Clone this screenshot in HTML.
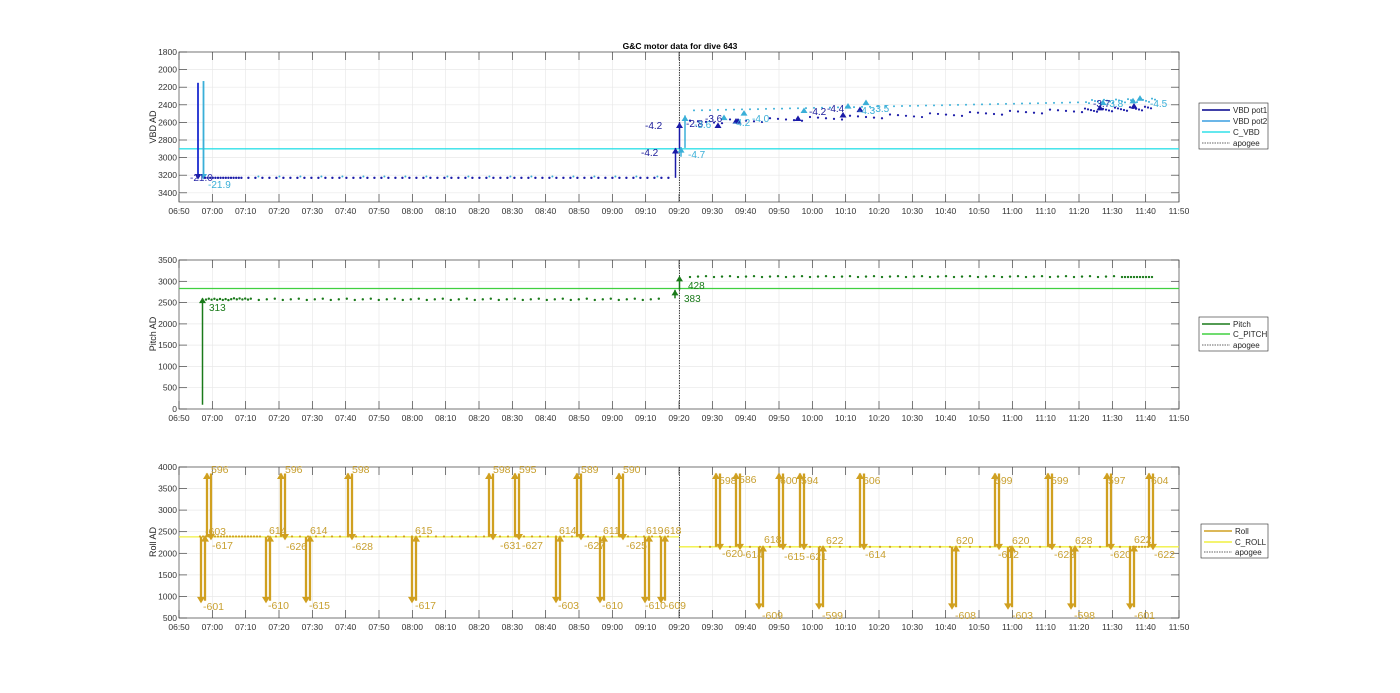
<!DOCTYPE html>
<html><head><meta charset="utf-8"><style>
html,body{margin:0;padding:0;background:#fff;}
svg{display:block;font-family:"Liberation Sans",sans-serif;}
.t{font-size:8.5px;fill:#333;}
.yl{font-size:9px;fill:#262626;}
.lg{font-size:8px;fill:#262626;}
</style></head><body>
<svg id="s" width="1400" height="693" viewBox="0 0 1400 693" xmlns="http://www.w3.org/2000/svg">
<rect width="1400" height="693" fill="#fff"/>
<g id="grid"></g>
<g id="data"></g>
<text x="680" y="49" text-anchor="middle" style="font-size:8.5px;font-weight:bold;fill:#000">G&amp;C motor data for dive 643</text>
<g class="t" text-anchor="end">
<text x="177" y="55">1800</text><text x="177" y="72.6">2000</text><text x="177" y="90.2">2200</text><text x="177" y="107.8">2400</text><text x="177" y="125.4">2600</text><text x="177" y="143">2800</text><text x="177" y="160.6">3000</text><text x="177" y="178.2">3200</text><text x="177" y="195.8">3400</text>
<text x="177" y="263">3500</text><text x="177" y="284.3">3000</text><text x="177" y="305.6">2500</text><text x="177" y="326.9">2000</text><text x="177" y="348.1">1500</text><text x="177" y="369.4">1000</text><text x="177" y="390.7">500</text><text x="177" y="412">0</text>
<text x="177" y="470">4000</text><text x="177" y="491.6">3500</text><text x="177" y="513.1">3000</text><text x="177" y="534.7">2500</text><text x="177" y="556.3">2000</text><text x="177" y="577.9">1500</text><text x="177" y="599.4">1000</text><text x="177" y="621">500</text>
</g>
<g class="yl" text-anchor="middle">
<text transform="translate(156,127) rotate(-90)">VBD AD</text>
<text transform="translate(156,334) rotate(-90)">Pitch AD</text>
<text transform="translate(156,542) rotate(-90)">Roll AD</text>
</g>
<g class="t" text-anchor="middle">
<text x="179" y="214">06:50</text><text x="212.3" y="214">07:00</text><text x="245.6" y="214">07:10</text><text x="279" y="214">07:20</text><text x="312.3" y="214">07:30</text><text x="345.6" y="214">07:40</text><text x="379" y="214">07:50</text><text x="412.3" y="214">08:00</text><text x="445.6" y="214">08:10</text><text x="479" y="214">08:20</text><text x="512.3" y="214">08:30</text><text x="545.6" y="214">08:40</text><text x="579" y="214">08:50</text><text x="612.3" y="214">09:00</text><text x="645.6" y="214">09:10</text><text x="679" y="214">09:20</text><text x="712.3" y="214">09:30</text><text x="745.6" y="214">09:40</text><text x="779" y="214">09:50</text><text x="812.3" y="214">10:00</text><text x="845.6" y="214">10:10</text><text x="879" y="214">10:20</text><text x="912.3" y="214">10:30</text><text x="945.6" y="214">10:40</text><text x="979" y="214">10:50</text><text x="1012.3" y="214">11:00</text><text x="1045.6" y="214">11:10</text><text x="1079" y="214">11:20</text><text x="1112.3" y="214">11:30</text><text x="1145.6" y="214">11:40</text><text x="1179" y="214">11:50</text>
</g>
<g class="t" text-anchor="middle">
<text x="179" y="421">06:50</text><text x="212.3" y="421">07:00</text><text x="245.6" y="421">07:10</text><text x="279" y="421">07:20</text><text x="312.3" y="421">07:30</text><text x="345.6" y="421">07:40</text><text x="379" y="421">07:50</text><text x="412.3" y="421">08:00</text><text x="445.6" y="421">08:10</text><text x="479" y="421">08:20</text><text x="512.3" y="421">08:30</text><text x="545.6" y="421">08:40</text><text x="579" y="421">08:50</text><text x="612.3" y="421">09:00</text><text x="645.6" y="421">09:10</text><text x="679" y="421">09:20</text><text x="712.3" y="421">09:30</text><text x="745.6" y="421">09:40</text><text x="779" y="421">09:50</text><text x="812.3" y="421">10:00</text><text x="845.6" y="421">10:10</text><text x="879" y="421">10:20</text><text x="912.3" y="421">10:30</text><text x="945.6" y="421">10:40</text><text x="979" y="421">10:50</text><text x="1012.3" y="421">11:00</text><text x="1045.6" y="421">11:10</text><text x="1079" y="421">11:20</text><text x="1112.3" y="421">11:30</text><text x="1145.6" y="421">11:40</text><text x="1179" y="421">11:50</text>
</g>
<g class="t" text-anchor="middle">
<text x="179" y="630">06:50</text><text x="212.3" y="630">07:00</text><text x="245.6" y="630">07:10</text><text x="279" y="630">07:20</text><text x="312.3" y="630">07:30</text><text x="345.6" y="630">07:40</text><text x="379" y="630">07:50</text><text x="412.3" y="630">08:00</text><text x="445.6" y="630">08:10</text><text x="479" y="630">08:20</text><text x="512.3" y="630">08:30</text><text x="545.6" y="630">08:40</text><text x="579" y="630">08:50</text><text x="612.3" y="630">09:00</text><text x="645.6" y="630">09:10</text><text x="679" y="630">09:20</text><text x="712.3" y="630">09:30</text><text x="745.6" y="630">09:40</text><text x="779" y="630">09:50</text><text x="812.3" y="630">10:00</text><text x="845.6" y="630">10:10</text><text x="879" y="630">10:20</text><text x="912.3" y="630">10:30</text><text x="945.6" y="630">10:40</text><text x="979" y="630">10:50</text><text x="1012.3" y="630">11:00</text><text x="1045.6" y="630">11:10</text><text x="1079" y="630">11:20</text><text x="1112.3" y="630">11:30</text><text x="1145.6" y="630">11:40</text><text x="1179" y="630">11:50</text>
</g>
<g style="font-size:10px">
<text x="190" y="181" fill="#2a2aa8">-21.0</text>
<text x="208" y="188" fill="#3aafd8">-21.9</text>
<text x="645" y="129" fill="#1a1a9a">-4.2</text>
<text x="641" y="156" fill="#1a1a9a">-4.2</text>
<text x="688" y="158" fill="#3aafd8">-4.7</text>
<text x="686" y="127" fill="#1a1a9a">-2.8</text>
<text x="694" y="128" fill="#3aafd8">-3.6</text>
<text x="705" y="122" fill="#1a1a9a">-3.6</text>
<text x="733" y="126" fill="#3aafd8">-4.2</text>
<text x="752" y="122" fill="#3aafd8">-4.0</text>
<text x="809" y="115" fill="#1a1a9a">-4.2</text>
<text x="827" y="112" fill="#1a1a9a">-4.4</text>
<text x="858" y="114" fill="#3aafd8">-4.3</text>
<text x="872" y="112" fill="#3aafd8">-3.5</text>
<text x="1093" y="107" fill="#1a1a9a">-3.7</text>
<text x="1106" y="107" fill="#3aafd8">-3.8</text>
<text x="1150" y="107" fill="#3aafd8">-4.5</text>
</g>
<g style="font-size:10px" fill="#1a7a1a">
<text x="209" y="311">313</text><text x="688" y="289">428</text><text x="684" y="302">383</text>
</g>
<g style="font-size:10.5px" fill="#c8a030">
<text x="211" y="473">596</text><text x="285" y="473">596</text><text x="352" y="473">598</text><text x="493" y="473">598</text><text x="519" y="473">595</text><text x="581" y="473">589</text><text x="623" y="473">590</text>
<text x="205" y="535">-603</text><text x="269" y="534">614</text><text x="310" y="534">614</text><text x="415" y="534">615</text><text x="559" y="534">614</text><text x="603" y="534">611</text><text x="646" y="534">619</text><text x="664" y="534">618</text>
<text x="212" y="549">-617</text><text x="286" y="550">-626</text><text x="352" y="550">-628</text><text x="500" y="549">-631</text><text x="522" y="549">-627</text><text x="584" y="549">-627</text><text x="626" y="549">-625</text>
<text x="203" y="610">-601</text><text x="268" y="609">-610</text><text x="309" y="609">-615</text><text x="415" y="609">-617</text><text x="558" y="609">-603</text><text x="602" y="609">-610</text><text x="645" y="609">-610</text><text x="665" y="609">-609</text>
<text x="719" y="484">598</text><text x="739" y="483">586</text><text x="780" y="484">600</text><text x="801" y="484">594</text><text x="863" y="484">606</text><text x="995" y="484">599</text><text x="1051" y="484">599</text><text x="1108" y="484">597</text><text x="1151" y="484">604</text>
<text x="722" y="557">-620</text><text x="742" y="558">-614</text><text x="764" y="543">618</text><text x="784" y="560">-615</text><text x="806" y="560">-621</text><text x="826" y="544">622</text><text x="865" y="558">-614</text><text x="956" y="544">620</text><text x="998" y="558">-612</text><text x="1012" y="544">620</text><text x="1054" y="558">-623</text><text x="1075" y="544">628</text><text x="1110" y="558">-620</text><text x="1134" y="543">622</text><text x="1154" y="558">-622</text>
<text x="762" y="619">-609</text><text x="822" y="619">-599</text><text x="955" y="619">-608</text><text x="1012" y="619">-603</text><text x="1074" y="619">-598</text><text x="1134" y="619">-601</text>
</g>
<g>
<rect x="1199" y="103" width="69" height="46" fill="#fff" stroke="#262626" stroke-width="0.6"/>
<line x1="1202" y1="110" x2="1230" y2="110" stroke="#00008b" stroke-width="1.5"/><text class="lg" x="1233" y="113">VBD pot1</text>
<line x1="1202" y1="121" x2="1230" y2="121" stroke="#3a9ee0" stroke-width="1.5"/><text class="lg" x="1233" y="124">VBD pot2</text>
<line x1="1202" y1="132" x2="1230" y2="132" stroke="#30e0e8" stroke-width="1.5"/><text class="lg" x="1233" y="135">C_VBD</text>
<line x1="1202" y1="143" x2="1230" y2="143" stroke="#333" stroke-width="0.8" stroke-dasharray="1.5,1"/><text class="lg" x="1233" y="146">apogee</text>
<rect x="1199" y="317" width="69" height="34" fill="#fff" stroke="#262626" stroke-width="0.6"/>
<line x1="1202" y1="324" x2="1230" y2="324" stroke="#1a7a1a" stroke-width="1.5"/><text class="lg" x="1233" y="327">Pitch</text>
<line x1="1202" y1="334" x2="1230" y2="334" stroke="#40d040" stroke-width="1.5"/><text class="lg" x="1233" y="337">C_PITCH</text>
<line x1="1202" y1="345" x2="1230" y2="345" stroke="#333" stroke-width="0.8" stroke-dasharray="1.5,1"/><text class="lg" x="1233" y="348">apogee</text>
<rect x="1201" y="524" width="67" height="34" fill="#fff" stroke="#262626" stroke-width="0.6"/>
<line x1="1204" y1="531" x2="1232" y2="531" stroke="#d0a020" stroke-width="1.5"/><text class="lg" x="1235" y="534">Roll</text>
<line x1="1204" y1="542" x2="1232" y2="542" stroke="#f0f040" stroke-width="1.5"/><text class="lg" x="1235" y="545">C_ROLL</text>
<line x1="1204" y1="552" x2="1232" y2="552" stroke="#333" stroke-width="0.8" stroke-dasharray="1.5,1"/><text class="lg" x="1235" y="555">apogee</text>
</g>
</svg>
<script>
const NS="http://www.w3.org/2000/svg";
const G=document.getElementById('grid'),D=document.getElementById('data');
function el(p,t,a){const e=document.createElementNS(NS,t);for(const k in a)e.setAttribute(k,a[k]);p.appendChild(e);return e;}
const X0=179,X1=1179;
const axes=[{t:52,b:202,ticks:[52,69.6,87.2,104.8,122.4,140,157.6,175.2,192.8]},
{t:260,b:409,ticks:[260,281.3,302.6,323.9,345.1,366.4,387.7,409]},
{t:467,b:618,ticks:[467,488.6,510.1,531.7,553.3,574.9,596.4,618]}];
axes.forEach(a=>{
 for(let i=1;i<30;i++){const x=X0+i*1000/30;el(G,'line',{x1:x,x2:x,y1:a.t,y2:a.b,stroke:'#e8e8e8','stroke-width':0.7});}
 a.ticks.forEach(y=>el(G,'line',{x1:X0,x2:X1,y1:y,y2:y,stroke:'#e8e8e8','stroke-width':0.7}));
 el(G,'rect',{x:X0,y:a.t,width:1000,height:a.b-a.t,fill:'none',stroke:'#404040','stroke-width':0.7});
 for(let i=0;i<=30;i++){const x=X0+i*1000/30;el(G,'line',{x1:x,x2:x,y1:a.t,y2:a.t+8,stroke:'#404040','stroke-width':0.7});el(G,'line',{x1:x,x2:x,y1:a.b,y2:a.b-8,stroke:'#404040','stroke-width':0.7});}
 a.ticks.forEach(y=>{el(G,'line',{x1:X0,x2:X0+8,y1:y,y2:y,stroke:'#404040','stroke-width':0.7});el(G,'line',{x1:X1,x2:X1-8,y1:y,y2:y,stroke:'#404040','stroke-width':0.7});});
 el(D,'line',{x1:679.5,x2:679.5,y1:a.t,y2:a.b,stroke:'#333','stroke-width':0.9,'stroke-dasharray':'1.5,1'});
});
function tri(x,y,up,c,s){s=s||3.5;el(D,'polygon',{points:up?`${x-s},${y+s*1.6} ${x+s},${y+s*1.6} ${x},${y}`:`${x-s},${y-s*1.6} ${x+s},${y-s*1.6} ${x},${y}`,fill:c});}
function dot(x,y,c,r){el(D,'circle',{cx:x,cy:y,r:r||1.2,fill:c});}
function vl(x,y1,y2,c,w){el(D,'line',{x1:x,x2:x,y1:y1,y2:y2,stroke:c,'stroke-width':w||1.8});}
const vy=v=>52+(v-1800)*0.088;
el(D,'line',{x1:X0,x2:X1,y1:vy(2900),y2:vy(2900),stroke:'#30e0e8','stroke-width':1.3});
vl(198,vy(2150),vy(3230),'#1a2ad0');vl(203.5,vy(2130),vy(3230),'#3aafd8');
tri(198,vy(3250),false,'#1a1aa8');tri(203.5,vy(3250),false,'#3aafd8');
for(let x=205;x<672;x+= (x<240?2.6:7)){dot(x,vy(3230),'#1a1aa8');if(x>240&&Math.floor(x)%3==0)dot(x+3,vy(3215),'#3aafd8',1);}
vl(675.5,vy(3230),vy(2890),'#1a1aa8',1.5);tri(675.5,vy(2890),true,'#1a1aa8');
vl(679.5,vy(2900),vy(2600),'#1a1aa8',1.5);tri(679.5,vy(2600),true,'#1a1aa8');
vl(681,vy(2990),vy(2880),'#3aafd8',1.5);tri(681,vy(2880),true,'#3aafd8');
vl(685,vy(2890),vy(2520),'#3aafd8',1.5);tri(685,vy(2520),true,'#3aafd8');
[[718,2600],[736,2550],[738,2550],[798,2520],[843,2480],[860,2420],[1100,2400],[1134,2380]].forEach(p=>tri(p[0],vy(p[1]),true,'#1a1aa8'));
[[724,2510],[744,2460],[804,2430],[848,2380],[866,2340],[1103,2340],[1133,2320],[1140,2290]].forEach(p=>tri(p[0],vy(p[1]),true,'#3aafd8'));
for(let x=690;x<1152;x+=(x>1080?3:8)){const t=(x-690)/460;dot(x,vy(2580-t*160+((x*7)%5)*10),'#1a1aa8',1.1);dot(x+4,vy(2440-t*110+((x*3)%4)*12),'#3aafd8',1);}
const py=v=>409-v*149/3500;
el(D,'line',{x1:X0,x2:X1,y1:py(2830),y2:py(2830),stroke:'#40d040','stroke-width':1.3});
vl(202.5,py(100),py(2600),'#1a7a1a',1.5);tri(202.5,py(2620),true,'#1a7a1a');
for(let x=206;x<665;x+=(x<250?2.8:8))dot(x,py(2600-((x*7)%3)*15),'#1a7a1a',1.2);
vl(675,py(2600),py(2800),'#1a7a1a',1.5);tri(675,py(2800),true,'#1a7a1a');
vl(679.5,py(2800),py(3100),'#1a7a1a',1.5);tri(679.5,py(3130),true,'#1a7a1a');
for(let x=690;x<1153;x+=(x>1115?3:8))dot(x,py(3100+((x*5)%3)*10),'#1a7a1a',1.2);
const ry=v=>618-(v-500)*151/3500;const RC='#d0a020';
el(D,'line',{x1:X0,x2:679,y1:ry(2380),y2:ry(2380),stroke:'#f0f040','stroke-width':1.3});
el(D,'line',{x1:679,x2:X1,y1:ry(2150),y2:ry(2150),stroke:'#f0f040','stroke-width':1.3});
for(let x=200;x<675;x+=(x<260?3:8))dot(x,ry(2390),RC,1.1);
for(let x=700;x<1150;x+=(x>1120?3:10))dot(x,ry(2150),RC,1.1);
function up(x,b){vl(x,ry(b),ry(3850),RC,2.3);tri(x,ry(3870),true,RC,4);vl(x+4,ry(3850),ry(b),RC,2.3);tri(x+4,ry(b-80),false,RC,4);}
function dn(x,b,lo){vl(x,ry(b),ry(lo),RC,2.3);tri(x,ry(lo-60),false,RC,4);vl(x+4,ry(lo),ry(b),RC,2.3);tri(x+4,ry(b+40),true,RC,4);}
[207,281,348,489,515,577,619].forEach(x=>up(x,2380));
[201,266,306,412,556,600,645,661].forEach(x=>dn(x,2380,900));
[716,736,779,800,860,995,1048,1107,1149].forEach(x=>up(x,2150));
[759,819,952,1008,1071,1130].forEach(x=>dn(x,2150,750));
</script>
</body></html>
